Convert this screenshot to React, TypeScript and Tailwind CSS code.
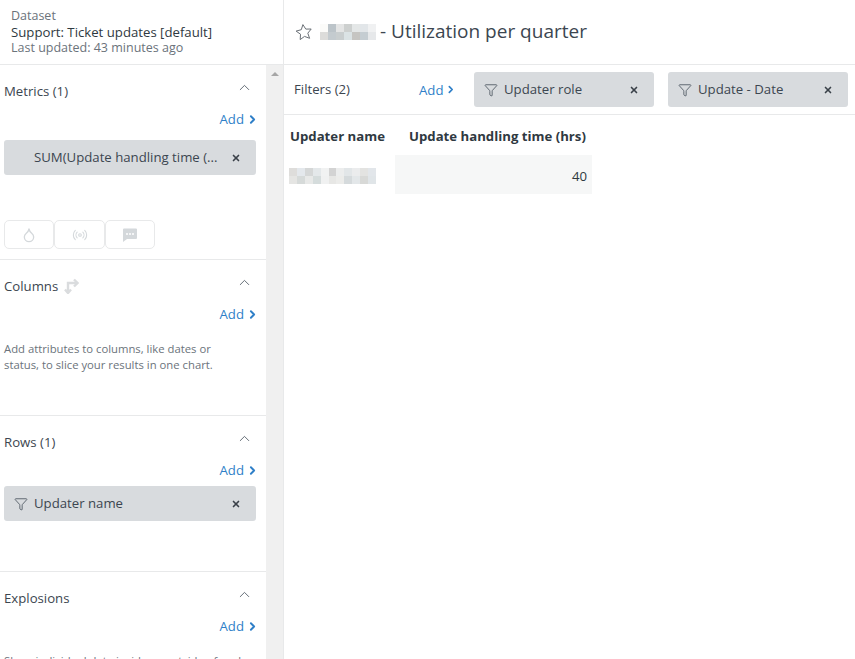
import { ReactNode } from "react";
import { Droplet, Radio, ChevronUp, ChevronRight, Filter, X } from "lucide-react";

const TITLE_BLUR: string[] = [
  "bg-[#fbfbf9]", "bg-[#bcc4c9]", "bg-[#e4e5e5]", "bg-[#cdd0cf]", "bg-[#e4e7e7]", "bg-[#e2e6e9]", "bg-[#f0f1f2]",
  "bg-[#dcdcda]", "bg-[#c4cbcf]", "bg-[#c9cecf]", "bg-[#dbe3e5]", "bg-[#c6c5c2]", "bg-[#c5cdd2]", "bg-[#e6e8ea]",
];

const NAME_BLUR: string[] = [
  "bg-[#dedddb]", "bg-[#e4e8ec]", "bg-[#d5d7d7]", "bg-[#e4e8ea]", "bg-[#f1f2f2]", "bg-[#d3d3d3]", "bg-[#eceded]", "bg-[#e2e6e8]", "bg-[#ebeced]", "bg-[#e3e3e1]", "bg-[#e2e6ea]",
  "bg-[#e5e5e3]", "bg-[#d6dad9]", "bg-[#e8e9e8]", "bg-[#d5dcdc]", "bg-[#f0f1f1]", "bg-[#e7e7e5]", "bg-[#ececea]", "bg-[#d5dadc]", "bg-[#e3e7e9]", "bg-[#d8d9d7]", "bg-[#e0e5e8]",
];

const AddLink = () => (
  <div className="flex items-center justify-end gap-[2px] leading-[18px] text-[#2f7fc8]">
    <span>Add</span>
    <ChevronRight size={13} strokeWidth={3.5} className="-mr-[3px]" />
  </div>
);

const Pill = ({ label, icon, className }: { label: string; icon?: boolean; className?: string }) => (
  <div className={`flex h-[35px] items-center rounded-[3px] bg-[#d8dbde] pr-[15px] text-[#3c4650] ${className ?? ""}`}>
    <span className="flex w-[30px] shrink-0 justify-center pl-[3px]">
      {icon && <Filter size={14} strokeWidth={1.3} className="text-[#3c4650]" />}
    </span>
    <span className="flex-1 truncate whitespace-nowrap">{label}</span>
    <X size={10} strokeWidth={4} className="shrink-0 text-[#3a4149]" />
  </div>
);

const SectionHead = ({ title }: { title: ReactNode }) => (
  <>
    <div className="flex h-[52px] items-center justify-between pr-[2px] pt-[1px] text-[#3c4650]">
      <div className="flex items-center gap-[5px]">{title}</div>
      <ChevronUp size={17} strokeWidth={1.2} className="mb-[8px] mr-[1px] text-[#4a5560]" />
    </div>
    <div className="-mt-[7px]">
      <AddLink />
    </div>
  </>
);

const Section = ({ title, height, children }: { title: ReactNode; height: string; children?: ReactNode }) => (
  <section className={`${height} overflow-hidden border-b border-[#e8e9ea] pl-1 pr-[10px]`}>
    <SectionHead title={title} />
    {children}
  </section>
);

const SwapIcon = () => (
  <svg width="16" height="16" viewBox="0 0 16 16" fill="none" stroke="#dadcde" strokeWidth="2.4">
    <path d="M5 15V5h9" />
    <path d="M2 11.5l3 3.5 3-3.5" />
    <path d="M11 1.5L14.5 5 11 8.5" />
  </svg>
);

const ChatIcon = () => (
  <svg width="16" height="16" viewBox="0 0 16 16">
    <path d="M2 1.5h12a1 1 0 0 1 1 1v8.5a1 1 0 0 1-1 1H5l-4 3V2.5a1 1 0 0 1 1-1z" fill="#d4d8db" />
    <circle cx="5" cy="7" r="1" fill="#fff" />
    <circle cx="8" cy="7" r="1" fill="#fff" />
    <circle cx="11" cy="7" r="1" fill="#fff" />
  </svg>
);

const TiltedStar = () => (
  <svg width="18" height="18" viewBox="0 0 18 18" fill="none" stroke="#6b7177" strokeWidth="1" strokeLinejoin="round">
    <path d="M7.9 1.6L10.8 6.1L16.2 6L12.8 10.2L14.6 15.3L9.5 13.4L5.2 16.6L5.5 11.2L1.1 8.1L6.3 6.7Z" />
  </svg>
);

const App = () => {
  return (
    <div className="flex h-[659px] w-[855px] overflow-hidden bg-white font-['Open_Sans','Noto_Sans',sans-serif] text-[13.2px]">
      <aside className="flex h-full w-[284px] shrink-0 flex-col border-r border-[#e8e9ea]">
        <div className="h-[65px] shrink-0 border-b border-[#e8e9ea] pl-[11px] pt-[8px] leading-4">
          <div className="text-[12.5px] text-[#6b737b]">Dataset</div>
          <div className="text-[#2f3941]">Support: Ticket updates [default]</div>
          <div className="text-[12.5px] text-[#6b737b]">Last updated: 43 minutes ago</div>
        </div>
        <div className="flex min-h-0 flex-1">
          <div className="w-[266px] shrink-0 overflow-hidden">
            <Section title="Metrics (1)" height="h-[195px]">
              <Pill label="SUM(Update handling time (..." className="mt-[12px]" />
              <div className="mt-[45px] flex">
                <div className="flex h-[29px] w-[50px] items-center justify-center rounded-[5px] border border-[#e8e9ea]">
                  <Droplet size={16} strokeWidth={2} className="text-[#d4d8db]" />
                </div>
                <div className="flex h-[29px] w-[51px] items-center justify-center rounded-[5px] border border-[#e8e9ea]">
                  <Radio size={16} strokeWidth={1.6} className="text-[#d4d8db]" />
                </div>
                <div className="flex h-[29px] w-[50px] items-center justify-center rounded-[5px] border border-[#e8e9ea]">
                  <ChatIcon />
                </div>
              </div>
            </Section>
            <Section
              height="h-[156px]"
              title={
                <>
                  <span>Columns</span>
                  <SwapIcon />
                </>
              }
            >
              <p className="mt-[18px] w-[225px] text-[11.3px] leading-4 text-[#6b737b]">
                Add attributes to columns, like dates or status, to slice your results in one chart.
              </p>
            </Section>
            <Section title="Rows (1)" height="h-[156px]">
              <Pill label="Updater name" icon className="mt-[7px]" />
            </Section>
            <section className="h-[100px] pl-1 pr-[10px]">
              <SectionHead title="Explosions" />
              <p className="mt-[18px] w-[245px] text-[11.3px] leading-4 text-[#6b737b]">
                Show individual data inside or outside of each
              </p>
            </section>
          </div>
          <div className="flex w-[17px] shrink-0 justify-center bg-[#f0f0f0] pt-[7px]">
            <div className="h-0 w-0 border-x-[4px] border-b-[4px] border-x-transparent border-b-[#a6a6a6]" />
          </div>
        </div>
      </aside>
      <main className="min-w-0 flex-1">
        <div className="flex h-[65px] items-center border-b border-[#e8e9ea] pb-[1px] pl-[11px] text-[#3c4650]">
          <TiltedStar />
          <div className="ml-[7px] grid h-4 w-14 grid-cols-7 grid-rows-2">
            {TITLE_BLUR.map((c, i) => (
              <div key={i} className={c} />
            ))}
          </div>
          <h1 className="ml-[4px] whitespace-nowrap text-[19px] font-normal">- Utilization per quarter</h1>
        </div>
        <div className="flex h-[50px] items-center border-b border-[#e8e9ea] pl-[10px] text-[#3c4650]">
          <span className="w-[125px] shrink-0">Filters (2)</span>
          <div className="w-[35px] shrink-0">
            <AddLink />
          </div>
          <Pill label="Updater role" icon className="ml-[20px] w-[180px]" />
          <Pill label="Update - Date" icon className="ml-[14px] w-[180px]" />
        </div>
        <div className="flex pl-[6px] pt-[12px] text-[#2f3941]">
          <div className="w-[105px] shrink-0">
            <div className="h-[18px] font-bold leading-[18px]">Updater name</div>
            <div className="-ml-[1px] mt-[23px] grid h-4 w-[87px] grid-cols-11 grid-rows-2">
              {NAME_BLUR.map((c, i) => (
                <div key={i} className={c} />
              ))}
            </div>
          </div>
          <div className="w-[197px] shrink-0">
            <div className="h-[18px] whitespace-nowrap pl-[14px] font-bold leading-[18px]">Update handling time (hrs)</div>
            <div className="mt-[10px] flex h-[39px] items-center justify-end bg-[#f6f7f7] pr-[5px] pt-[4px]">40</div>
          </div>
        </div>
      </main>
    </div>
  );
};

export default App;
